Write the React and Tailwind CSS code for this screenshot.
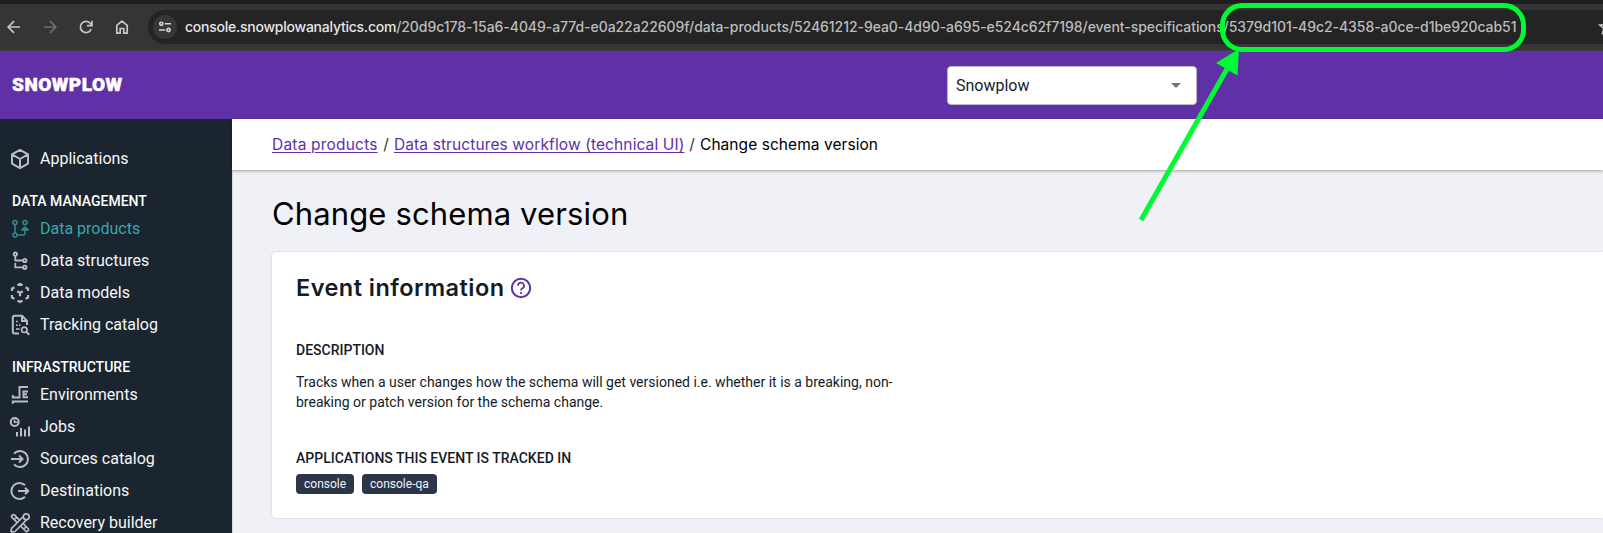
import React from "react";

function Icon({ children, className = "" }) {
  return (
    <svg
      viewBox="0 0 24 24"
      className={`size-6 shrink-0 ${className}`}
      fill="none"
      stroke="currentColor"
      strokeWidth="2"
    >
      {children}
    </svg>
  );
}

const icons = {
  applications: (
    <Icon>
      <path d="M12 2.900 20 7.300v9.400L12 21.200 4 16.700V7.300zM4 7.400 12 12l8-4.600M12 12v9" strokeLinejoin="round" />
    </Icon>
  ),
  products: (
    <Icon>
      <g strokeWidth="1.600">
        <circle cx="7" cy="5.600" r="2" />
        <circle cx="17" cy="5.600" r="2" />
        <circle cx="7" cy="18" r="2" />
        <path d="M7 7.600v8.400M9 18h5.800c1.500 0 2.200-1 2.200-2.300V11" />
        <path d="M13 13.800 17 10l4 3.800z" fill="currentColor" stroke="none" />
        <path d="M13.500 13 17 10.300l3.500 2.700" />
      </g>
    </Icon>
  ),
  structures: (
    <Icon>
      <g strokeWidth="1.800">
        <circle cx="7.300" cy="5.200" r="1.700" />
        <circle cx="16.800" cy="11.500" r="1.700" />
        <circle cx="16.800" cy="18.300" r="1.700" />
        <path d="M7.300 7v4.500h7.600M7.300 14v4.300h7.600" />
      </g>
    </Icon>
  ),
  models: (
    <Icon>
      <path d="M9.500 4.300 12 2.900l2.500 1.400M17.500 6.200 20 7.600V10M20 14v2.500l-2.500 1.400M14.500 19.600 12 21l-2.500-1.400M6.500 17.900 4 16.500V14M4 10V7.600l2.500-1.400M9.300 10.300 12 12l2.700-1.700M12 12v3.300" strokeWidth="2.200" />
    </Icon>
  ),
  tracking: (
    <Icon>
      <path d="M11 20.500H6.500A1.700 1.700 0 0 1 4.800 18.800V4.500A1.700 1.700 0 0 1 6.500 2.800H14L19 7.800V12M14 3v5h5" />
      <path d="M8 8.500h1.800M8 12.200h1.500M11 12.200h1.500M8 16h3.500" strokeWidth="1.700" />
      <circle cx="16.300" cy="16.800" r="2.700" strokeWidth="1.700" />
      <path d="m18.300 18.800 3 3" />
    </Icon>
  ),
  environments: (
    <Icon>
      <path d="M20 4H11.500V14.500H4.800V12M20 8.500H15.500V14.200H20M15.500 11.300H19M4.800 20.800V18.500H20" strokeWidth="1.900" />
    </Icon>
  ),
  jobs: (
    <Icon>
      <circle cx="6.700" cy="7" r="4" />
      <path d="M6.500 4.500V7.300H9.500" strokeWidth="1.600" />
      <path d="M9 17v4.500M13 13v8.500M17 14.500v7M21 11.500v10" />
    </Icon>
  ),
  sources: (
    <Icon>
      <path d="M6 6.700a8 8 0 1 1 0 10.600M3 12h11M11 8.500l3.500 3.500-3.500 3.500" />
    </Icon>
  ),
  destinations: (
    <Icon>
      <path d="M17 6.300a8 8 0 1 0 0 11.400M10 12h10M17 8.800l3.200 3.200L17 15.200" />
    </Icon>
  ),
  recovery: (
    <Icon>
      <g strokeWidth="1.700" strokeLinejoin="round">
        <path d="M9.300 11.700 3.700 6.100a1.600 1.600 0 0 1 0-1.200l1.200-1.200a1.600 1.600 0 0 1 1.200 0L11.800 9.300M14.700 12.200l5.800 5.800a1.600 1.600 0 0 1 0 1.200l-1.300 1.300a1.600 1.600 0 0 1-1.200 0L12.200 14.700M7 8l1.700-1.700M16.300 17.500l1.700-1.700" />
        <path d="M3 21.200 3.500 17.300 15.300 5.500M3 21.200 7 20.500 18.700 8.700" />
        <circle cx="18.200" cy="5.800" r="2.900" />
      </g>
    </Icon>
  ),
};

function NavItem({ icon, label, active }) {
  return (
    <a className={`flex h-8 items-center gap-2 pl-2 text-base ${active ? "text-[#3aa5ab]" : "text-[#f4f6f7]"}`}>
      <span className={active ? "text-[#35868d]" : "text-[#b9bec3]"}>{icons[icon]}</span>
      <span>{label}</span>
    </a>
  );
}

function NavHeading({ children }) {
  return <h2 className="mt-4 mb-0.5 h-5 pl-3 text-sm leading-5 font-medium text-white">{children}</h2>;
}

function BrowserBar() {
  return (
    <div className="flex h-[51px] items-start border-t-4 border-b border-t-[#1c1f1e] border-b-[#414141] bg-[#353535] font-['Inter',sans-serif]">
      <div className="flex h-[46px] items-center gap-3 pl-0.5 text-[#c7c7c7]">
        <Icon><path d="M18 12H6.500M12 6.200 6.200 12l5.800 5.800" strokeWidth="1.700" /></Icon>
        <Icon className="text-[#6e6e6e]"><path d="M6 12h11.500M12 6.200l5.800 5.800-5.800 5.800" strokeWidth="1.700" /></Icon>
        <Icon>
          <path d="M17.200 14A5.600 5.600 0 1 1 16 8L17.600 9.600" strokeWidth="1.700" />
          <path d="M18 5.800V10.700H13" strokeWidth="1.700" />
        </Icon>
        <Icon><path d="M6.800 18.200V10.300L12 6.200l5.200 4.100v7.900H13.800v-4.700H10.200v4.700z" strokeWidth="1.700" /></Icon>
      </div>
      <div className="mt-1.5 ml-3.5 flex h-[34px] flex-1 items-center overflow-hidden rounded-l-full bg-[#242424] pl-[5px]">
        <div className="flex size-6 items-center justify-center rounded-full bg-[#373737] text-[#d6d6d6]">
          <svg viewBox="0 0 14 14" className="size-3.5" fill="none" stroke="currentColor" strokeWidth="1.600">
            <circle cx="3.300" cy="3.800" r="1.600" />
            <circle cx="10.500" cy="10" r="1.600" />
            <path d="M6.800 3.800H13M1 10h6.200" />
          </svg>
        </div>
        <div className="ml-2 text-sm font-medium whitespace-nowrap">
          <span className="tracking-[-0.24px] text-[#e6e6e6]">console.snowplowanalytics.com</span>
          <span className="tracking-[-0.06px] text-[#bdbdbd]">/20d9c178-15a6-4049-a77d-e0a22a22609f/data-products/52461212-9ea0-4d90-a695-e524c62f7198/event-specifications/5379d101-49c2-4358-a0ce-d1be920cab51</span>
        </div>
        <Icon className="-mr-4 ml-auto text-[#c7c7c7]"><path d="m12 4.800 2 4.800 5.200.4-4 3.400 1.300 5.100-4.500-2.800-4.500 2.800 1.300-5.100-4-3.400 5.200-.4z" strokeWidth="1.500" /></Icon>
      </div>
    </div>
  );
}

function Header() {
  return (
    <header className="flex h-[68px] items-center bg-[#6030a7]">
      <div className="w-[947px] pb-0.5 pl-3 text-[19px] leading-none font-black tracking-[0.5px] text-white [-webkit-text-stroke:0.5px_white]">SNOWPLOW</div>
      <div className="flex h-[39px] w-[250px] items-center justify-between rounded-[4px] border border-[#b9b9be] bg-white pr-[15px] pl-2 text-base text-[#17202e]">
        <span className="pt-0.5">Snowplow</span>
        <svg viewBox="0 0 10 5" className="h-[5px] w-2.5" fill="#757575"><path d="M0 0h10L5 5z" /></svg>
      </div>
    </header>
  );
}

function Sidebar() {
  return (
    <nav className="w-[232px] shrink-0 bg-[#1b2530] pt-6">
      <NavItem icon="applications" label="Applications" />
      <NavHeading>DATA MANAGEMENT</NavHeading>
      <NavItem icon="products" label="Data products" active />
      <NavItem icon="structures" label="Data structures" />
      <NavItem icon="models" label="Data models" />
      <NavItem icon="tracking" label="Tracking catalog" />
      <NavHeading>INFRASTRUCTURE</NavHeading>
      <NavItem icon="environments" label="Environments" />
      <NavItem icon="jobs" label="Jobs" />
      <NavItem icon="sources" label="Sources catalog" />
      <NavItem icon="destinations" label="Destinations" />
      <NavItem icon="recovery" label="Recovery builder" />
    </nav>
  );
}

function Tag({ children }) {
  return <span className="flex h-5 items-center rounded-[4px] bg-[#2c3648] px-2 text-xs text-[#f1f3f5]">{children}</span>;
}

function Annotation() {
  return (
    <>
      <div className="absolute top-[3px] left-[1220px] h-[49px] w-[306px] rounded-[22px] border-[5px] border-[#00fb32]" />
      <svg className="absolute top-0 left-0 h-[533px] w-[1603px]" viewBox="0 0 1603 533">
        <path d="M1141 220 1227 69" stroke="#00fb32" strokeWidth="5" />
        <path d="M1239 49 1216 63 1237.500 75.500z" fill="#00fb32" />
      </svg>
    </>
  );
}

export default function App() {
  return (
    <div className="relative flex h-[533px] w-[1603px] flex-col overflow-hidden bg-[#f0f1f6] font-['Roboto',sans-serif]">
      <BrowserBar />
      <Header />
      <div className="flex h-[414px]">
        <Sidebar />
        <main className="flex-1 border-l border-[#d5d6da]">
          <div className="-ml-px flex h-[51px] items-center gap-1 bg-white pl-10 font-['Inter',sans-serif] text-[15.5px] whitespace-nowrap text-black shadow-[0_1px_3px_rgba(0,0,0,0.35)]">
            <a className="w-[106px] tracking-[0.2px] text-[#6030a7] underline underline-offset-2">Data products</a>
            <span className="w-2 text-center text-[#333333]">/</span>
            <a className="w-[290px] tracking-[0.11px] text-[#6030a7] underline underline-offset-2">Data structures workflow (technical UI)</a>
            <span className="w-2 text-center text-[#333333]">/</span>
            <span className="tracking-[0.06px]">Change schema version</span>
          </div>
          <h1 className="mt-6 h-10 pl-[39px] font-['Inter',sans-serif] text-[31px] leading-10 tracking-[0.13px] text-black">Change schema version</h1>
          <section className="mt-[18px] ml-[39px] h-[266px] rounded-l-[4px] bg-white pt-5 pl-6 text-[#131b28] shadow-[0_0_2px_rgba(0,0,0,0.2)]">
            <div className="flex h-8 items-center gap-1">
              <h2 className="w-[209px] font-['Inter',sans-serif] text-[23.5px] font-semibold tracking-[0.45px] whitespace-nowrap">Event information</h2>
              <Icon className="text-[#6030a7]">
                <circle cx="12" cy="12" r="9.200" />
                <path d="M9 9.700a3 3 0 1 1 4.400 2.600c-1 .6-1.400 1-1.400 2.200M12 16v2" strokeWidth="1.700" />
              </Icon>
            </div>
            <h3 className="mt-9 text-sm font-medium">DESCRIPTION</h3>
            <p className="mt-3 text-sm">
              Tracks when a user changes how the schema will get versioned i.e. whether it is a breaking, non-
              <br />
              breaking or patch version for the schema change.
            </p>
            <h3 className="mt-9 text-sm font-medium">APPLICATIONS THIS EVENT IS TRACKED IN</h3>
            <div className="mt-1.5 flex gap-2">
              <Tag>console</Tag>
              <Tag>console-qa</Tag>
            </div>
          </section>
        </main>
      </div>
      <Annotation />
    </div>
  );
}
